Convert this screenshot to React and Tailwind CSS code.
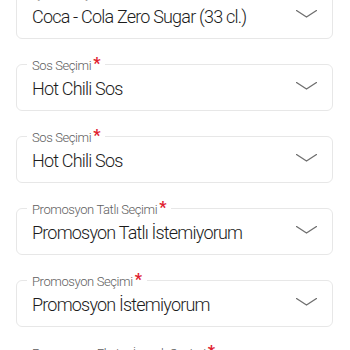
import React from 'react';

const fields = [
  { label: 'İçecek Seçimi', value: 'Coca - Cola Zero Sugar (33 cl.)' },
  { label: 'Sos Seçimi', value: 'Hot Chili Sos' },
  { label: 'Sos Seçimi', value: 'Hot Chili Sos' },
  { label: 'Promosyon Tatlı Seçimi', value: 'Promosyon Tatlı İstemiyorum' },
  { label: 'Promosyon Seçimi', value: 'Promosyon İstemiyorum' },
  { label: 'Promosyon Ekstra İçecek Seçimi', value: 'Promosyon İstemiyorum' },
];

const Chevron = () => (
  <svg width="21" height="8" viewBox="0 0 21 8" fill="none" className="shrink-0 -translate-y-[3px]">
    <path d="M0.5 0.5 L10.5 7 L20.5 0.5" stroke="#707070" strokeWidth="1.3" strokeLinecap="round" strokeLinejoin="round" />
  </svg>
);

const SelectField = ({ label, value }) => (
  <fieldset className="border border-[#e7e7e7] rounded-md px-[15px] pb-[9px] min-w-0">
    <legend className="-ml-[5px] px-[5px] text-[13px] leading-4 font-light text-[#5e5e5e] tracking-[-0.4px]">
      <span className="relative top-[2px]">
        {label}
        <span className="inline-block h-4 align-top ml-[2px] text-[#e0202e] text-[16px] font-bold leading-4 -translate-y-[2px]">*</span>
      </span>
    </legend>
    <div className="mt-[5px] flex items-center justify-between">
      <span className="text-[18px] leading-6 font-light text-[#1c1c1c] tracking-[-0.8px] whitespace-nowrap">{value}</span>
      <Chevron />
    </div>
  </fieldset>
);

export default function App() {
  return (
    <div className="w-[350px] h-[350px] overflow-hidden bg-white" style={{ fontFamily: 'Roboto, "Noto Sans", sans-serif' }}>
      <div className="-mt-4 px-4 pr-[17px] flex flex-col gap-[17px]">
        {fields.map((f, i) => (
          <SelectField key={i} label={f.label} value={f.value} />
        ))}
      </div>
    </div>
  );
}
